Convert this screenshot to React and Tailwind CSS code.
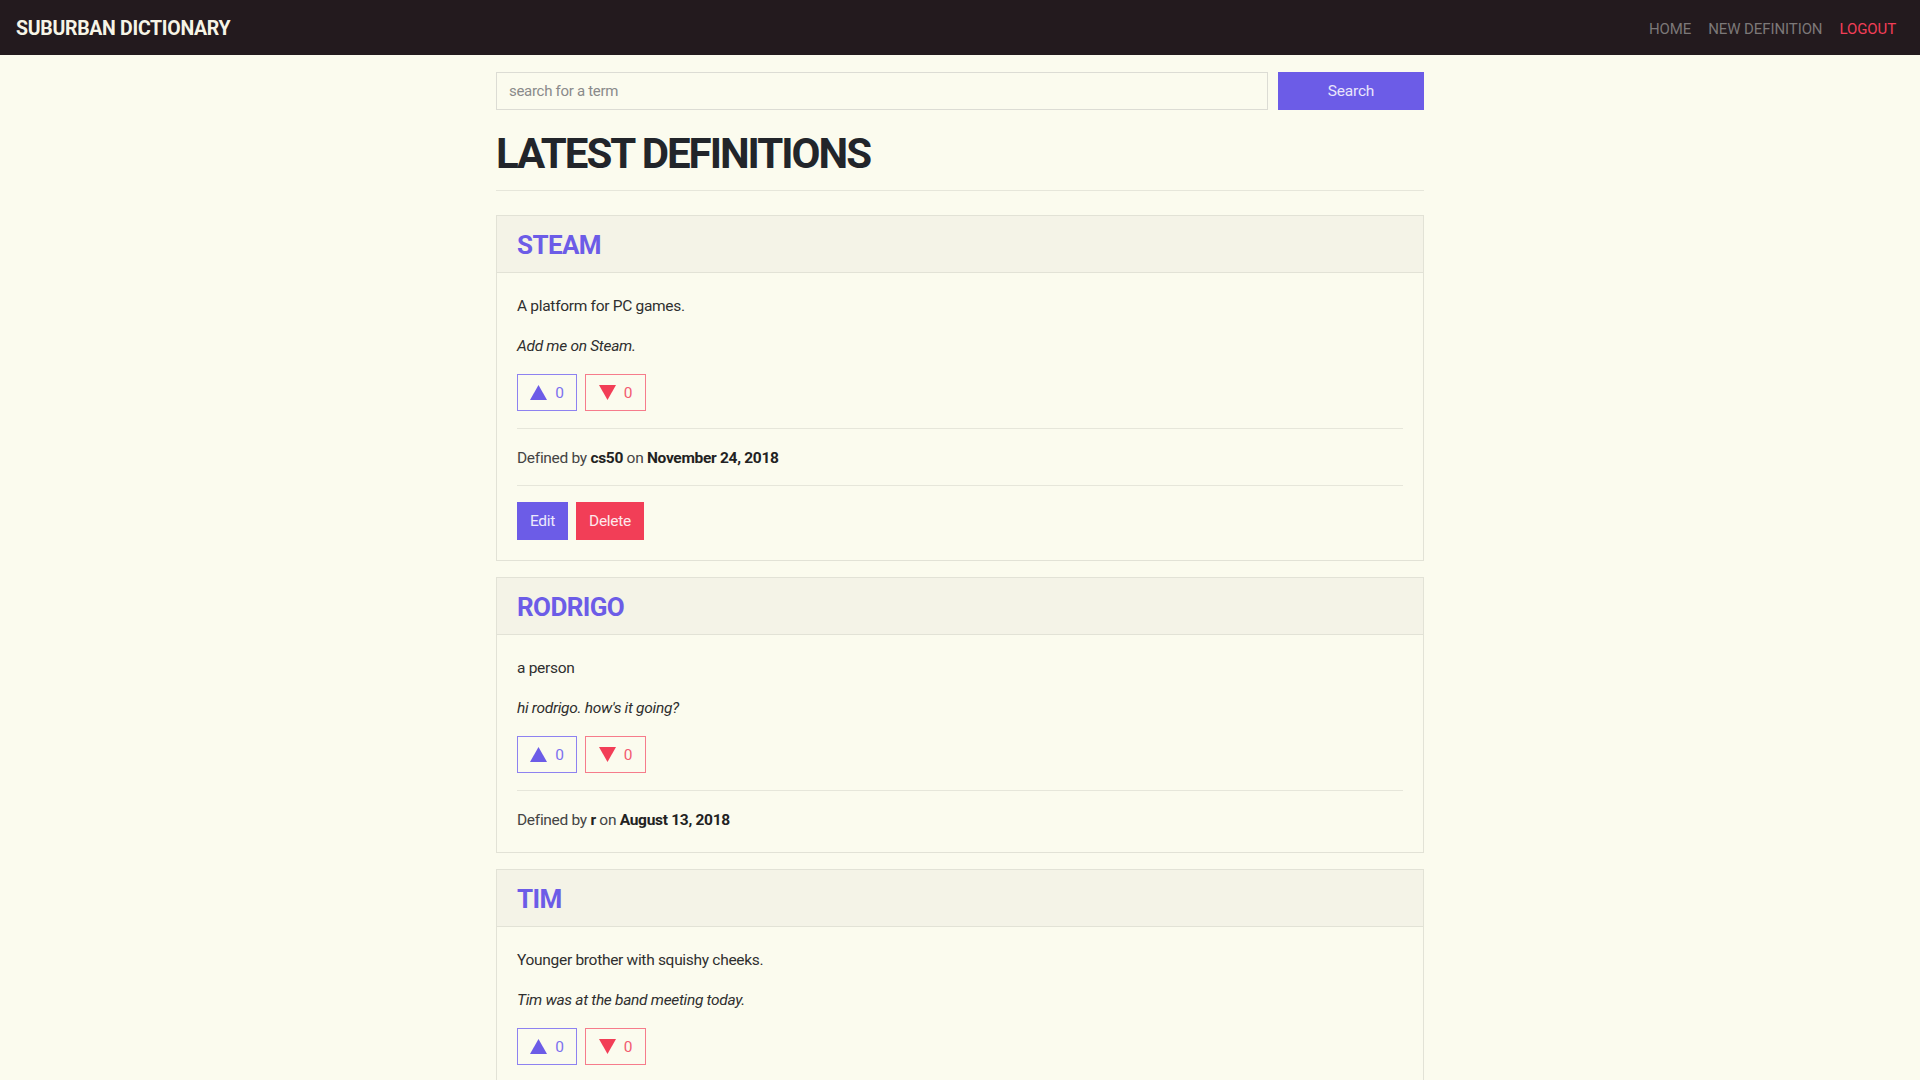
import React from "react";

const defs = [
  {
    word: "STEAM",
    meaning: "A platform for PC games.",
    example: "Add me on Steam.",
    user: "cs50",
    date: "November 24, 2018",
    mine: true,
  },
  {
    word: "RODRIGO",
    meaning: "a person",
    example: "hi rodrigo. how's it going?",
    user: "r",
    date: "August 13, 2018",
    mine: false,
  },
  {
    word: "TIM",
    meaning: "Younger brother with squishy cheeks.",
    example: "Tim was at the band meeting today.",
    user: "cs50",
    date: "August 13, 2018",
    mine: false,
  },
];

function Up() {
  return (
    <svg width="17" height="15" viewBox="0 0 17 15">
      <polygon points="8.5,0 17,15 0,15" fill="#6c5ce7" />
    </svg>
  );
}

function Down() {
  return (
    <svg width="17" height="15" viewBox="0 0 17 15">
      <polygon points="0,0 17,0 8.5,15" fill="#f23e57" />
    </svg>
  );
}

function Card({ d }) {
  return (
    <div className="border border-[#e2e2d6] mb-4">
      <div className="h-[57px] bg-[#f4f3e7] border-b border-[#e2e2d6] px-5 flex items-center pt-[1px]">
        <h2 className="text-[26px] leading-none font-bold text-[#6c5ce7] tracking-[-0.6px]">{d.word}</h2>
      </div>
      <div className="p-5 text-[15.5px] leading-6 text-[#2f2f2f] tracking-[-0.3px]">
        <p className="mb-4 pt-[1px]">{d.meaning}</p>
        <p className="mb-4 italic">{d.example}</p>
        <div className="flex gap-2">
          <button className="h-[37px] w-[60px] border border-[#8e82f0] flex items-center justify-center gap-2 text-[#7d70ee]">
            <Up />
            <span>0</span>
          </button>
          <button className="h-[37px] w-[61px] border border-[#f67c8b] flex items-center justify-center gap-2 text-[#f25a70]">
            <Down />
            <span>0</span>
          </button>
        </div>
        <hr className="mt-[17px] mb-4 border-t border-[#e6e6da]" />
        <p className="text-[#444] pt-[1px]">
          Defined by <b className="text-[#222]">{d.user}</b> on <b className="text-[#222]">{d.date}</b>
        </p>
        {d.mine && (
          <>
            <hr className="mt-[15px] mb-4 border-t border-[#e6e6da]" />
            <div className="flex gap-2">
              <button className="h-[38px] w-[51px] bg-[#6c5ce7] text-[#ece9fc]">Edit</button>
              <button className="h-[38px] w-[68px] bg-[#f23e57] text-[#fde8eb]">Delete</button>
            </div>
          </>
        )}
      </div>
    </div>
  );
}

export default function App() {
  return (
    <div className="min-h-screen bg-[#fbfbee]" style={{ fontFamily: "Roboto, 'Noto Sans', sans-serif" }}>
      <nav className="h-[55px] bg-[#231a1e] flex items-center justify-between pl-4 pr-6 pt-[2px]">
        <div className="text-[19.5px] font-bold text-[#f6f4e6] tracking-[-0.3px]">SUBURBAN DICTIONARY</div>
        <div className="flex items-center gap-[17px] text-[15px] tracking-[-0.1px] pt-[2px]">
          <a className="text-[#7c7878]">HOME</a>
          <a className="text-[#7c7878]">NEW DEFINITION</a>
          <a className="text-[#f23e57]">LOGOUT</a>
        </div>
      </nav>
      <main className="max-w-[960px] mx-auto px-4">
        <form className="flex gap-[10px] pt-[17px]">
          <input
            className="flex-1 h-[38px] border border-[#dcdcd4] bg-transparent px-3 text-[15px] tracking-[-0.3px] placeholder:text-[#8a8a8a] outline-none"
            placeholder="search for a term"
          />
          <button type="button" className="w-[146px] h-[38px] bg-[#6c5ce7] text-[#e8e5fb] text-[15.5px] tracking-[-0.2px] pt-[1px]">
            Search
          </button>
        </form>
        <h1 className="mt-[18px] text-[42px] leading-[52px] font-bold text-[#22252a] tracking-[-2px]">LATEST DEFINITIONS</h1>
        <hr className="mt-[10px] mb-[24px] border-t border-[#e6e6da]" />
        {defs.map((d) => (
          <Card key={d.word} d={d} />
        ))}
      </main>
    </div>
  );
}
